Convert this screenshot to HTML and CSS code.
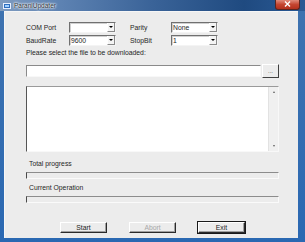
FILE: index.html
```html
<!DOCTYPE html>
<html lang="en">
<head>
  <meta charset="UTF-8" />
  <title>ParaniUpdater</title>
  <link rel="stylesheet" href="styles.css">
</head>
<body>
  <div class="window">
    <div class="titlebar">
      <span class="app-icon">
        <svg width="8" height="8" viewBox="0 0 8 8">
          <rect x="0.5" y="1.5" width="7" height="5" fill="#2f6fc0" stroke="#e8f0ff" stroke-width="1"/>
          <rect x="2" y="3" width="4" height="2" fill="#9fd0ff"/>
        </svg>
      </span>
      <span class="title">ParaniUpdater</span>
      <span class="close">
        <svg width="7" height="6" viewBox="0 0 7 6">
          <path d="M1 0.5 L6 5.5 M6 0.5 L1 5.5" stroke="#fff" stroke-width="1.4"/>
        </svg>
      </span>
    </div>

    <div class="client">
      <div class="settings">
        <label>COM Port</label>
        <div class="combo"><span class="combo-text"></span><span class="drop"></span></div>
        <label class="label-right">Parity</label>
        <div class="combo"><span class="combo-text">None</span><span class="drop"></span></div>
        <label>BaudRate</label>
        <div class="combo"><span class="combo-text">9600</span><span class="drop"></span></div>
        <label class="label-right">StopBit</label>
        <div class="combo"><span class="combo-text">1</span><span class="drop"></span></div>
      </div>

      <p class="hint">Please select the file to be downloaded:</p>

      <div class="file-row">
        <div class="file-input"></div>
        <button class="browse">...</button>
      </div>

      <div class="log">
        <div class="log-text"></div>
        <div class="scrollbar">
          <span class="arrow-up"></span>
          <span class="arrow-down"></span>
        </div>
      </div>

      <div class="progress-label">Total progress</div>
      <div class="progress"></div>
      <div class="progress-label">Current Operation</div>
      <div class="progress"></div>

      <div class="actions">
        <button>Start</button>
        <button disabled>Abort</button>
        <button class="default">Exit</button>
      </div>
    </div>
  </div>
</body>
</html>
```

FILE: styles.css
```css
body {
  margin: 0;
  font-family: "Liberation Sans", Arial, sans-serif;
  font-size: 6.8px;
  color: #262626;
}

.window {
  width: 305px;
  height: 242px;
  display: flex;
  flex-direction: column;
  background: linear-gradient(to bottom, #3f73b0, #2a68b2);
}

.titlebar {
  height: 11px;
  display: flex;
  align-items: center;
  background: linear-gradient(to right, #7f9cc0 0%, #5d82b2 20%, #3a6398 50%, #1f4a80 80%, #2a5a95 100%);
}

.app-icon {
  display: flex;
  margin-left: 3px;
}

.title {
  margin-left: 3px;
  font-size: 6.5px;
  color: #2a3440;
  text-shadow: 0 0 2px #fff, 0 0 2px #fff, 0 0 3px #fff;
}

.close {
  margin-left: auto;
  margin-right: 5px;
  width: 23px;
  height: 9px;
  margin-top: -2px;
  display: flex;
  align-items: center;
  justify-content: center;
  background: linear-gradient(to bottom, #e08a7a, #c44530 50%, #b3301c);
  border: 1px solid #5a2520;
  border-top: none;
  border-radius: 0 0 3px 3px;
}

.client {
  flex: 1;
  margin: 0 7px 4px 4px;
  padding: 11px 19px 0 22px;
  background: #ececec;
  box-shadow: inset 1px 1px 0 #f6f6f6;
}

.settings {
  display: grid;
  grid-template-columns: 43px 47px 55px 47px;
  grid-auto-rows: 11px;
  row-gap: 2px;
  align-items: center;
}

.label-right {
  padding-left: 14px;
}

.combo {
  height: 11px;
  box-sizing: border-box;
  display: flex;
  background: #fff;
  border: 1px solid;
  border-color: #707070 #f4f4f4 #f4f4f4 #707070;
  box-shadow: 1px 1px 0 #d0d0d0 inset;
}

.combo-text {
  flex: 1;
  padding-left: 1px;
  line-height: 9px;
}

.drop {
  width: 8px;
  display: flex;
  align-items: center;
  justify-content: center;
  background: #f4f4f4;
  border-left: 1px solid #fff;
  border-right: 1px solid #8a8a8a;
  border-bottom: 1px solid #8a8a8a;
  box-sizing: border-box;
}

.drop::after {
  content: "";
  border-left: 2px solid transparent;
  border-right: 2px solid transparent;
  border-top: 2px solid #000;
}

.hint {
  margin: 3px 0 7px;
  line-height: 8px;
}

.file-row {
  display: flex;
  align-items: center;
  height: 14px;
}

.file-input {
  flex: 1;
  height: 12px;
  box-sizing: border-box;
  background: #fff;
  border: 1px solid;
  border-color: #8a8a8a #f8f8f8 #f8f8f8 #8a8a8a;
}

.browse {
  width: 17px;
  height: 14px;
  margin-left: 1px;
  padding: 0;
  font: inherit;
  font-size: 6px;
  line-height: 6px;
  color: #333;
  background: #ececec;
  border: 1px solid;
  border-color: #fff #404040 #404040 #fff;
}

.log {
  margin-top: 8px;
  height: 66px;
  box-sizing: border-box;
  display: flex;
  background: #fff;
  border: 1px solid;
  border-color: #9a9a9a #f8f8f8 #f8f8f8 #555;
}

.log-text {
  flex: 1;
}

.scrollbar {
  width: 9px;
  display: flex;
  flex-direction: column;
  justify-content: space-between;
  align-items: center;
  padding: 4px 0;
  background: #f0f0f0;
  border-left: 1px solid #e2e2e2;
}

.arrow-up {
  border-left: 1.5px solid transparent;
  border-right: 1.5px solid transparent;
  border-bottom: 2px solid #606060;
}

.arrow-down {
  border-left: 1.5px solid transparent;
  border-right: 1.5px solid transparent;
  border-top: 2px solid #606060;
}

.progress-label {
  margin-top: 8px;
  padding-left: 3px;
  line-height: 8px;
}

.progress {
  margin-top: 4px;
  height: 7px;
  box-sizing: border-box;
  border: 1px solid;
  border-color: #8c8c8c #fafafa #fafafa #4a4a4a;
  background: #ececec;
}

.progress + .progress-label {
  margin-top: 5px;
}

.actions {
  margin-top: 19px;
  display: flex;
  justify-content: center;
  gap: 22px;
}

.actions button {
  width: 47px;
  height: 11px;
  padding: 0;
  font: inherit;
  line-height: 8px;
  color: #222;
  background: #ececec;
  border: 1px solid;
  border-color: #fff #2a2a2a #2a2a2a #fff;
  box-shadow: inset -1px -1px 0 #a0a0a0;
}

.actions button:disabled {
  color: #a8a8a8;
}

.actions .default {
  outline: 1px solid #1a1a1a;
}
```
